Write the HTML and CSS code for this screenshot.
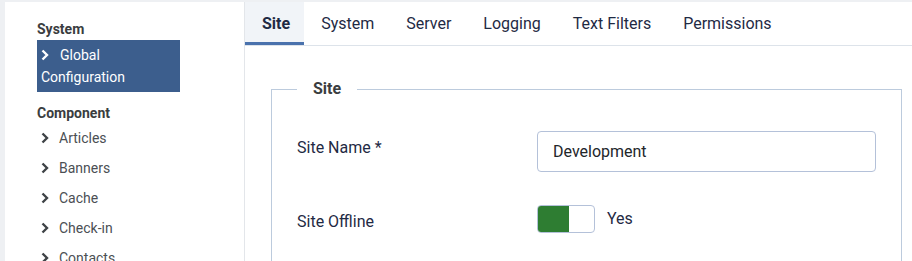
FILE: index.html
```html
<!DOCTYPE html>
<html lang="en">
  <head>
    <meta charset="UTF-8" />
    <meta name="viewport" content="width=device-width, initial-scale=1.0" />
    <title>Global Configuration</title>
    <link rel="stylesheet" href="styles.css">
  </head>
  <body>
    <div class="wrap">
      <div class="sidebar">
        <h3 class="side-title">System</h3>
        <ul class="side-list">
          <li class="active">
            <a href="#"><svg class="chev" viewBox="0 0 8 12"><path d="M1.5 1.5 L6 6 L1.5 10.5" /></svg>Global Configuration</a>
          </li>
        </ul>
        <h3 class="side-title second">Component</h3>
        <ul class="side-list">
          <li><a href="#"><svg class="chev" viewBox="0 0 8 12"><path d="M1.5 1.5 L6 6 L1.5 10.5" /></svg>Articles</a></li>
          <li><a href="#"><svg class="chev" viewBox="0 0 8 12"><path d="M1.5 1.5 L6 6 L1.5 10.5" /></svg>Banners</a></li>
          <li><a href="#"><svg class="chev" viewBox="0 0 8 12"><path d="M1.5 1.5 L6 6 L1.5 10.5" /></svg>Cache</a></li>
          <li><a href="#"><svg class="chev" viewBox="0 0 8 12"><path d="M1.5 1.5 L6 6 L1.5 10.5" /></svg>Check-in</a></li>
          <li><a href="#"><svg class="chev" viewBox="0 0 8 12"><path d="M1.5 1.5 L6 6 L1.5 10.5" /></svg>Contacts</a></li>
        </ul>
      </div>
      <div class="main">
        <ul class="tabs">
          <li class="active"><a href="#">Site</a></li>
          <li><a href="#">System</a></li>
          <li><a href="#">Server</a></li>
          <li><a href="#">Logging</a></li>
          <li><a href="#">Text Filters</a></li>
          <li><a href="#">Permissions</a></li>
        </ul>
        <div class="panel">
          <fieldset class="box">
            <legend>Site</legend>
            <div class="row">
              <label class="label">Site Name *</label>
              <div class="control">
                <input class="input" type="text" value="Development" />
              </div>
            </div>
            <div class="row">
              <label class="label">Site Offline</label>
              <div class="control switch-wrap">
                <span class="switch"><span class="on"></span></span>
                <span class="switch-text">Yes</span>
              </div>
            </div>
          </fieldset>
        </div>
      </div>
    </div>
  </body>
</html>
```

FILE: styles.css
```css
* {
  margin: 0;
  padding: 0;
  box-sizing: border-box;
}
html,
body {
  height: 100%;
  overflow: hidden;
}
body {
  background-color: #eef0f3;
  font-family: Roboto, "Liberation Sans", sans-serif;
  color: #22262a;
}
a {
  text-decoration: none;
  color: inherit;
}
li {
  list-style: none;
}
.wrap {
  display: flex;
  padding: 2px 0 0 5px;
  min-height: 100%;
}

/* sidebar */
.sidebar {
  width: 240px;
  flex-shrink: 0;
  background-color: #fff;
  border-right: 1px solid #e3e6ea;
  padding: 17px 0 0 32px;
}
.side-title {
  font-size: 14px;
  font-weight: 700;
  line-height: 20px;
  color: #3a3d40;
}
.side-title.second {
  margin-top: 11px;
}
.side-list li a {
  display: flex;
  align-items: center;
  height: 30px;
  padding-left: 4px;
  font-size: 14px;
  color: #4b4f54;
}
.side-list li.active a {
  display: block;
  height: auto;
  width: 143px;
  margin-top: 1px;
  padding: 4px 4px;
  line-height: 22px;
  background-color: #3c5e8d;
  color: #fff;
}
.chev {
  width: 8px;
  height: 12px;
  margin-right: 10px;
  fill: none;
  stroke: #3f4347;
  stroke-width: 2.4;
  vertical-align: -1px;
}
.side-list li.active .chev {
  stroke: #fff;
  margin-right: 11px;
}

/* main */
.main {
  flex: 1;
  background-color: #fff;
}
.tabs {
  display: flex;
  border-bottom: 1px solid #dde3ea;
}
.tabs li a {
  display: block;
  height: 43px;
  line-height: 43px;
  padding: 0 15px 0 17px;
  font-size: 16px;
  color: #1f2a44;
  border-bottom: 3px solid transparent;
}
.tabs li.active a {
  padding-right: 14px;
  background-color: #f1f4f8;
  border-bottom-color: #4a72ad;
  font-weight: 700;
}
.panel {
  padding: 32px 10px 0 26px;
}
.box {
  border: 1px solid #bccbdd;
  padding: 0 25px 40px 25px;
}
.box legend {
  padding: 0 16px;
  font-size: 16px;
  font-weight: 700;
  line-height: 22px;
  color: #3a3d40;
}
.row {
  display: flex;
  margin-top: 31px;
}
.row + .row {
  margin-top: 33px;
}
.label {
  width: 240px;
  flex-shrink: 0;
  padding-top: 7px;
  font-size: 16px;
  color: #1f2a44;
}
.control {
  flex: 1;
}
.input {
  display: block;
  width: 100%;
  height: 41px;
  padding: 0 15px;
  border: 1px solid #b4c1d9;
  border-radius: 4px;
  font-family: inherit;
  font-size: 16px;
  color: #22262a;
  background-color: #fff;
}
.switch-wrap {
  display: flex;
  align-items: center;
  gap: 12px;
}
.switch {
  display: block;
  width: 58px;
  height: 28px;
  border: 1px solid #b4c1d9;
  border-radius: 4px;
  overflow: hidden;
}
.switch .on {
  display: block;
  width: 31px;
  height: 100%;
  background-color: #2e7d32;
}
.switch-text {
  font-size: 16px;
  color: #1f2a44;
  margin-top: -2px;
}
```
